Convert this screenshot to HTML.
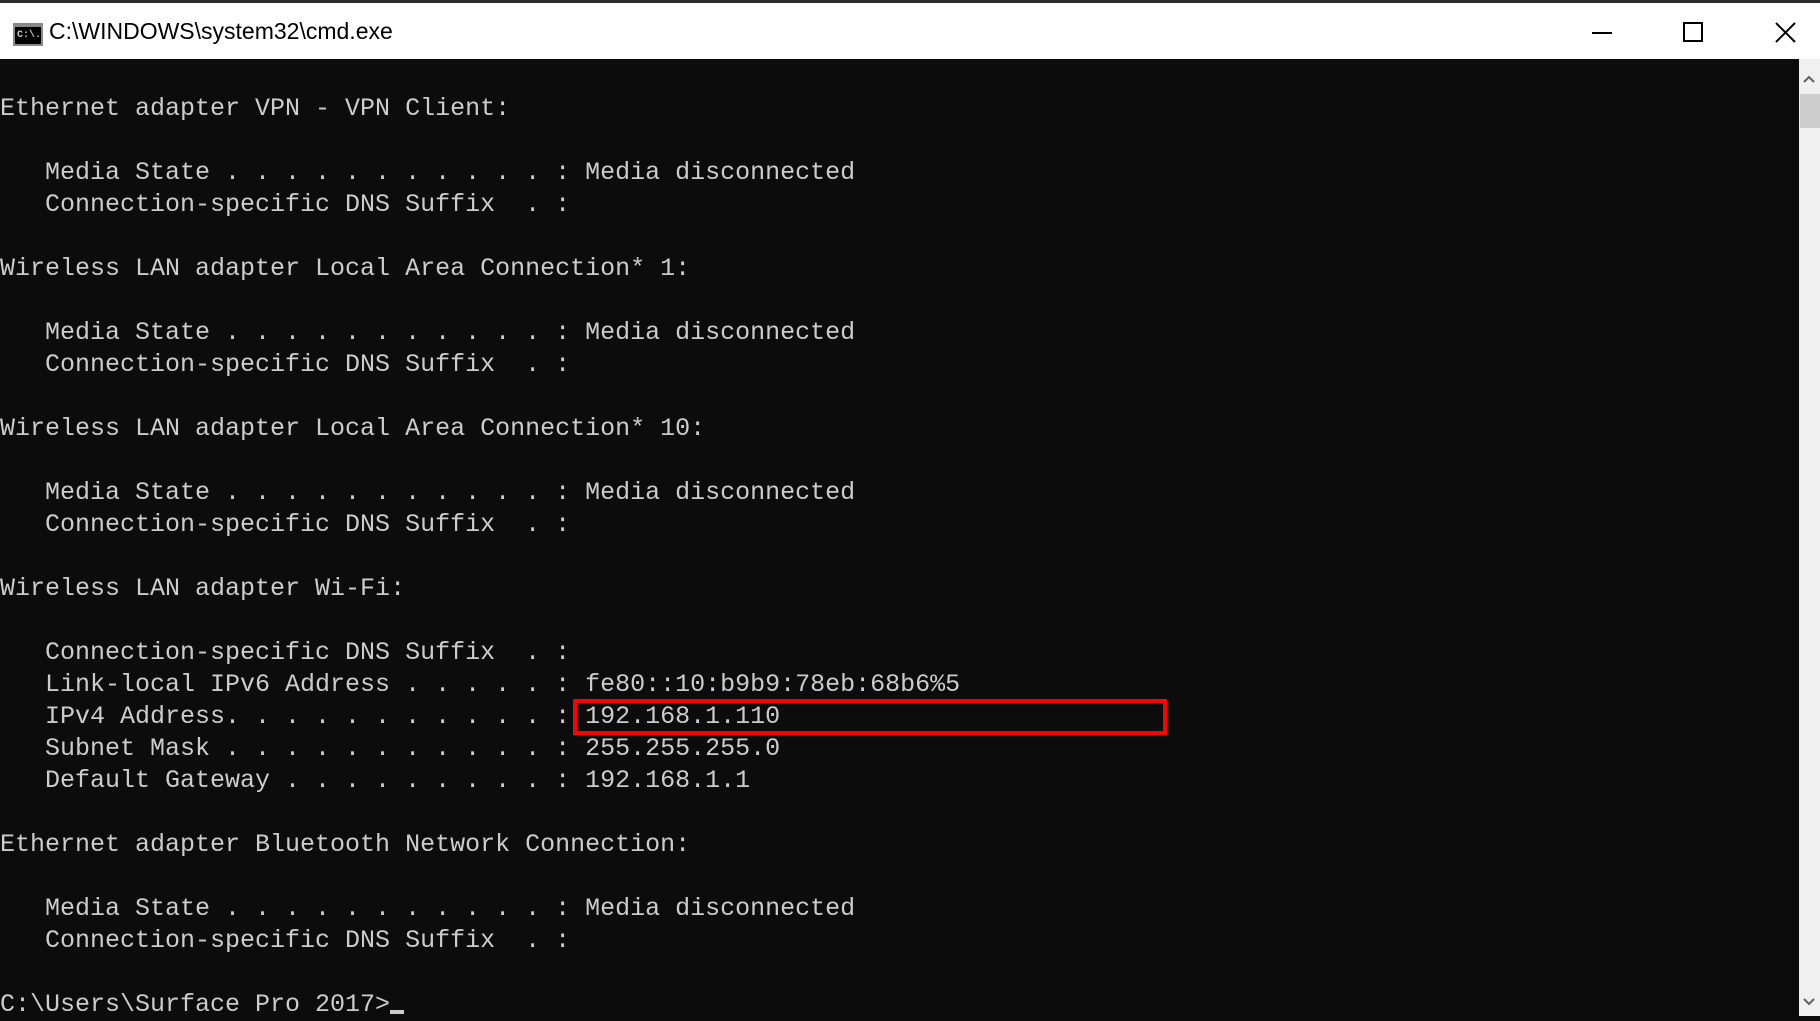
<!DOCTYPE html>
<html><head><meta charset="utf-8"><style>
*{margin:0;padding:0;box-sizing:border-box}
body{width:1820px;height:1016px;background:#0c0c0c;overflow:hidden;position:relative;font-family:"Liberation Sans",sans-serif}
.top{position:absolute;left:0;top:0;width:1820px;height:3px;background:#2b2b2b}
.title{position:absolute;left:0;top:3px;width:1820px;height:56px;background:#fff}
.title .t{position:absolute;left:49px;top:15px;font-size:23px;color:#000}
.icon{position:absolute;left:13px;top:20px;width:30px;height:23px;background:#000;border:2px solid #888;border-top-width:4px;color:#ccc;font:bold 10px "Liberation Mono",monospace;padding:3px 2px}
pre{position:absolute;left:0;top:93px;font-family:"Liberation Mono",monospace;font-size:25px;line-height:32px;color:#cccccc}
.box{position:absolute;left:573px;top:699px;width:594px;height:36px;border:4px solid #f00}
.sb{position:absolute;left:1799px;top:59px;width:21px;height:957px;background:#f0f0f0}
.thumb{position:absolute;left:1800px;top:94px;width:20px;height:34px;background:#cdcdcd}
.cur{position:absolute;left:390px;top:1010px;width:14px;height:4px;background:#ccc}
</style></head><body>
<div class="top"></div>
<div class="title"><div class="icon">C:\.</div><div class="t">C:\WINDOWS\system32\cmd.exe</div>
<svg style="position:absolute;left:1580px;top:10px" width="230" height="40">
<line x1="12" y1="20" x2="32" y2="20" stroke="#000" stroke-width="2"/>
<rect x="104" y="10" width="18" height="18" fill="none" stroke="#000" stroke-width="2"/>
<path d="M196 10 L215 29 M215 10 L196 29" stroke="#000" stroke-width="2"/>
</svg></div>
<pre>Ethernet adapter VPN - VPN Client:

   Media State . . . . . . . . . . . : Media disconnected
   Connection-specific DNS Suffix  . :

Wireless LAN adapter Local Area Connection* 1:

   Media State . . . . . . . . . . . : Media disconnected
   Connection-specific DNS Suffix  . :

Wireless LAN adapter Local Area Connection* 10:

   Media State . . . . . . . . . . . : Media disconnected
   Connection-specific DNS Suffix  . :

Wireless LAN adapter Wi-Fi:

   Connection-specific DNS Suffix  . :
   Link-local IPv6 Address . . . . . : fe80::10:b9b9:78eb:68b6%5
   IPv4 Address. . . . . . . . . . . : 192.168.1.110
   Subnet Mask . . . . . . . . . . . : 255.255.255.0
   Default Gateway . . . . . . . . . : 192.168.1.1

Ethernet adapter Bluetooth Network Connection:

   Media State . . . . . . . . . . . : Media disconnected
   Connection-specific DNS Suffix  . :

C:\Users\Surface Pro 2017&gt;</pre>
<div class="box"></div>
<div class="cur"></div>
<div class="sb"></div><div class="thumb"></div>
<svg style="position:absolute;left:1799px;top:59px" width="21" height="957">
<path d="M5 23 L10 18 L15 23" stroke="#606060" stroke-width="2" fill="none"/>
<path d="M5 940 L10 945 L15 940" stroke="#606060" stroke-width="2" fill="none"/>
</svg>
</body></html>
